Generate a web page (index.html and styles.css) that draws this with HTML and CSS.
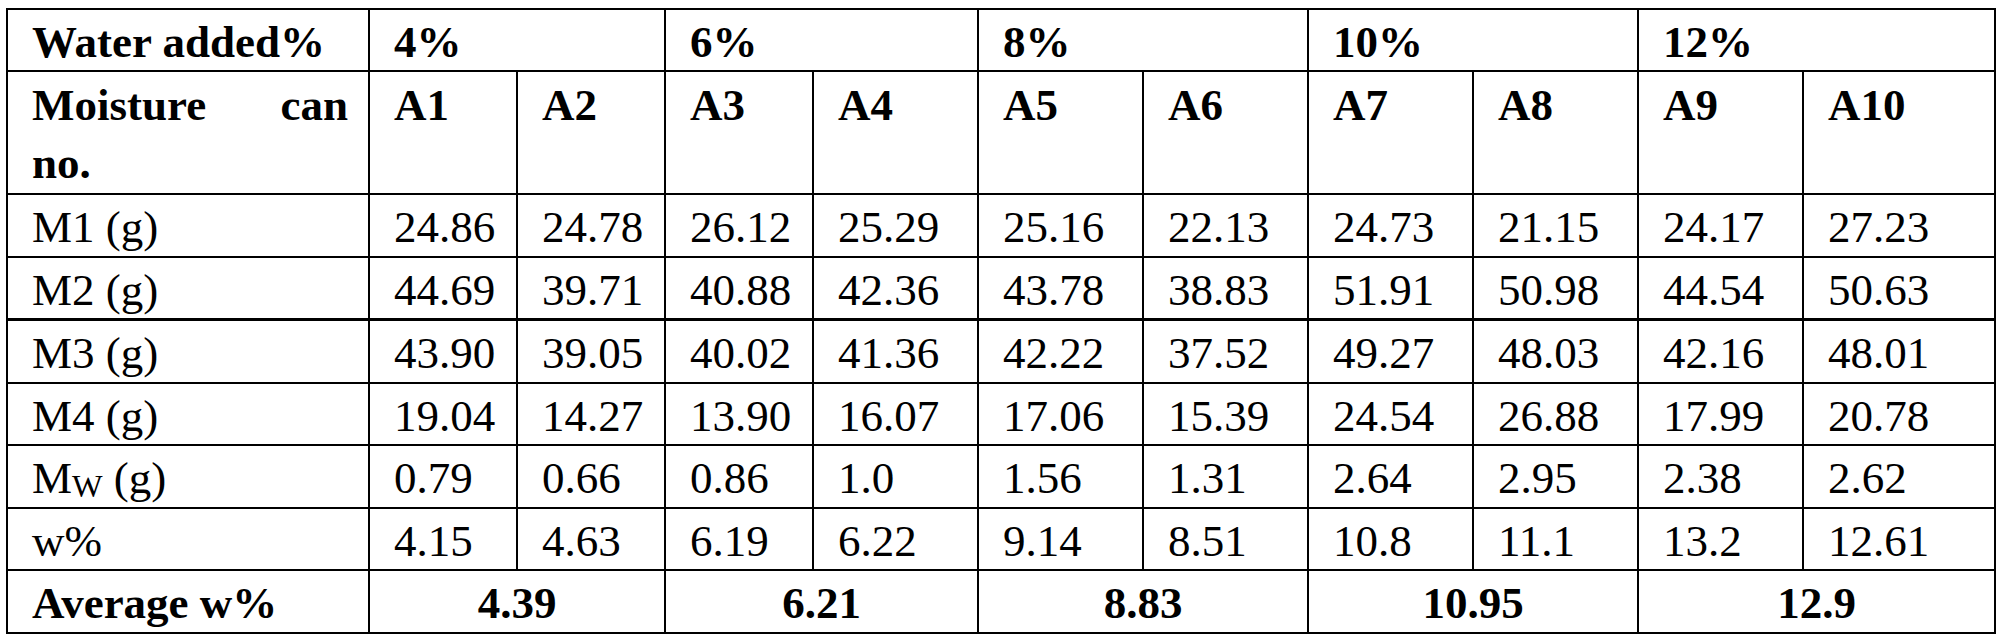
FILE: index.html
```html
<!DOCTYPE html>
<html lang="en">

<head>
  <meta charset="UTF-8" />
  <title>Moisture content</title>
  <link rel="stylesheet" href="styles.css">
</head>

<body>

  <div class="page">
    <table class="data">
      <colgroup>
        <col class="c-label">
        <col class="c-narrow"><col class="c-narrow"><col class="c-narrow">
        <col class="c-wide"><col class="c-wide"><col class="c-wide">
        <col class="c-wide"><col class="c-wide"><col class="c-wide">
        <col class="c-last">
      </colgroup>
      <tr class="bold">
        <td>Water added%</td>
        <td colspan="2">4%</td>
        <td colspan="2">6%</td>
        <td colspan="2">8%</td>
        <td colspan="2">10%</td>
        <td colspan="2">12%</td>
      </tr>
      <tr class="bold tall">
        <td class="justify">Moisture can no.</td>
        <td>A1</td><td>A2</td><td>A3</td><td>A4</td><td>A5</td>
        <td>A6</td><td>A7</td><td>A8</td><td>A9</td><td>A10</td>
      </tr>
      <tr class="row">
        <td>M1 (g)</td>
        <td>24.86</td><td>24.78</td><td>26.12</td><td>25.29</td><td>25.16</td>
        <td>22.13</td><td>24.73</td><td>21.15</td><td>24.17</td><td>27.23</td>
      </tr>
      <tr class="row thick-bottom">
        <td>M2 (g)</td>
        <td>44.69</td><td>39.71</td><td>40.88</td><td>42.36</td><td>43.78</td>
        <td>38.83</td><td>51.91</td><td>50.98</td><td>44.54</td><td>50.63</td>
      </tr>
      <tr class="row">
        <td>M3 (g)</td>
        <td>43.90</td><td>39.05</td><td>40.02</td><td>41.36</td><td>42.22</td>
        <td>37.52</td><td>49.27</td><td>48.03</td><td>42.16</td><td>48.01</td>
      </tr>
      <tr class="row">
        <td>M4 (g)</td>
        <td>19.04</td><td>14.27</td><td>13.90</td><td>16.07</td><td>17.06</td>
        <td>15.39</td><td>24.54</td><td>26.88</td><td>17.99</td><td>20.78</td>
      </tr>
      <tr class="row">
        <td>M<sub>W</sub> (g)</td>
        <td>0.79</td><td>0.66</td><td>0.86</td><td>1.0</td><td>1.56</td>
        <td>1.31</td><td>2.64</td><td>2.95</td><td>2.38</td><td>2.62</td>
      </tr>
      <tr class="row">
        <td>w%</td>
        <td>4.15</td><td>4.63</td><td>6.19</td><td>6.22</td><td>9.14</td>
        <td>8.51</td><td>10.8</td><td>11.1</td><td>13.2</td><td>12.61</td>
      </tr>
      <tr class="bold row">
        <td>Average w%</td>
        <td colspan="2" class="center">4.39</td>
        <td colspan="2" class="center">6.21</td>
        <td colspan="2" class="center">8.83</td>
        <td colspan="2" class="center">10.95</td>
        <td colspan="2" class="center">12.9</td>
      </tr>
    </table>
  </div>

</body>

</html>
```

FILE: styles.css
```css
body {
  margin: 0;
  background: #fff;
  font-family: "Liberation Serif", "DejaVu Serif", serif;
  color: #000;
}

.page {
  padding: 8px 0 0 6px;
}

.data {
  border-collapse: collapse;
  table-layout: fixed;
  width: 1988px;
}

.c-label {
  width: 362px;
}

.c-narrow {
  width: 148px;
}

.c-wide {
  width: 165px;
}

.c-last {
  width: 192px;
}

.data td {
  border: 2px solid #000;
  padding: 4px 22px 0 24px;
  font-family: "Liberation Serif", "DejaVu Serif", serif;
  font-size: 45px;
  line-height: 56px;
  height: 56px;
  vertical-align: top;
  text-align: left;
}

.row td {
  height: 56.5px;
}

.bold td {
  font-weight: bold;
}

.tall td {
  height: 117px;
  line-height: 58px;
}

.data td.justify {
  text-align: justify;
  text-align-last: left;
  padding-right: 20px;
}

.data td.center {
  text-align: center;
  padding-left: 0;
  padding-right: 0;
}

.thick-bottom td {
  border-bottom-width: 3px;
}

sub {
  font-size: 0.72em;
  vertical-align: -0.12em;
  line-height: 0;
}
```
